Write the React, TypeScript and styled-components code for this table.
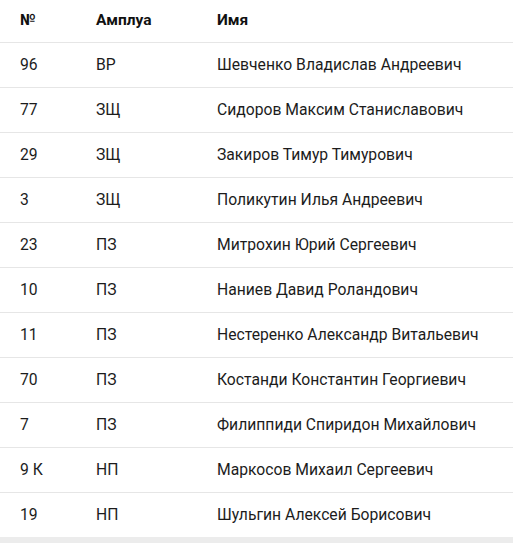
import { createGlobalStyle } from "styled-components";
import styled from "styled-components";

const GlobalStyle = createGlobalStyle`
    html, body {
        margin: 0;
        padding: 0;
        background: #ffffff;
        font-family: Roboto, "Noto Sans", sans-serif;
    }
`;

const Wrapper = styled.div`
    width: 513px;
    height: 543px;
    display: flex;
    flex-direction: column;
    background: #ffffff;
    overflow: hidden;
`;

const Table = styled.table`
    width: 100%;
    border-collapse: collapse;
`;

const HeadCell = styled.th`
    height: 40px;
    padding: 0 0 2px;
    padding-left: ${(p: { $pad: number }) => p.$pad}px;
    text-align: left;
    font-size: 15.5px;
    font-weight: 700;
    color: #111111;
    border-bottom: 1px solid #e6e6e6;
    vertical-align: middle;
`;

const Row = styled.tr`
    border-bottom: 1px solid #e6e6e6;

    &:last-child {
        border-bottom: 0;
    }
`;

const Cell = styled.td`
    height: 42px;
    padding: 0 0 2px;
    padding-left: ${(p: { $pad: number }) => p.$pad}px;
    font-size: 15.7px;
    color: #1c1c1c;
    vertical-align: middle;
`;

const Footer = styled.div`
    flex: 1;
    background: #ececec;
`;

const players = [
    ["96", "ВР", "Шевченко Владислав Андреевич"],
    ["77", "ЗЩ", "Сидоров Максим Станиславович"],
    ["29", "ЗЩ", "Закиров Тимур Тимурович"],
    ["3", "ЗЩ", "Поликутин Илья Андреевич"],
    ["23", "ПЗ", "Митрохин Юрий Сергеевич"],
    ["10", "ПЗ", "Наниев Давид Роландович"],
    ["11", "ПЗ", "Нестеренко Александр Витальевич"],
    ["70", "ПЗ", "Костанди Константин Георгиевич"],
    ["7", "ПЗ", "Филиппиди Спиридон Михайлович"],
    ["9 К", "НП", "Маркосов Михаил Сергеевич"],
    ["19", "НП", "Шульгин Алексей Борисович"],
];

export default function App() {
    return (
        <>
            <GlobalStyle />
            <Wrapper>
                <Table>
                    <colgroup>
                        <col style={{ width: 76 }} />
                        <col style={{ width: 121 }} />
                        <col />
                    </colgroup>
                    <thead>
                        <tr>
                            <HeadCell $pad={20}>№</HeadCell>
                            <HeadCell $pad={20}>Амплуа</HeadCell>
                            <HeadCell $pad={20}>Имя</HeadCell>
                        </tr>
                    </thead>
                    <tbody>
                        {players.map(([num, role, name]) => (
                            <Row key={num}>
                                <Cell $pad={20}>{num}</Cell>
                                <Cell $pad={20}>{role}</Cell>
                                <Cell $pad={20}>{name}</Cell>
                            </Row>
                        ))}
                    </tbody>
                </Table>
                <Footer />
            </Wrapper>
        </>
    );
}
